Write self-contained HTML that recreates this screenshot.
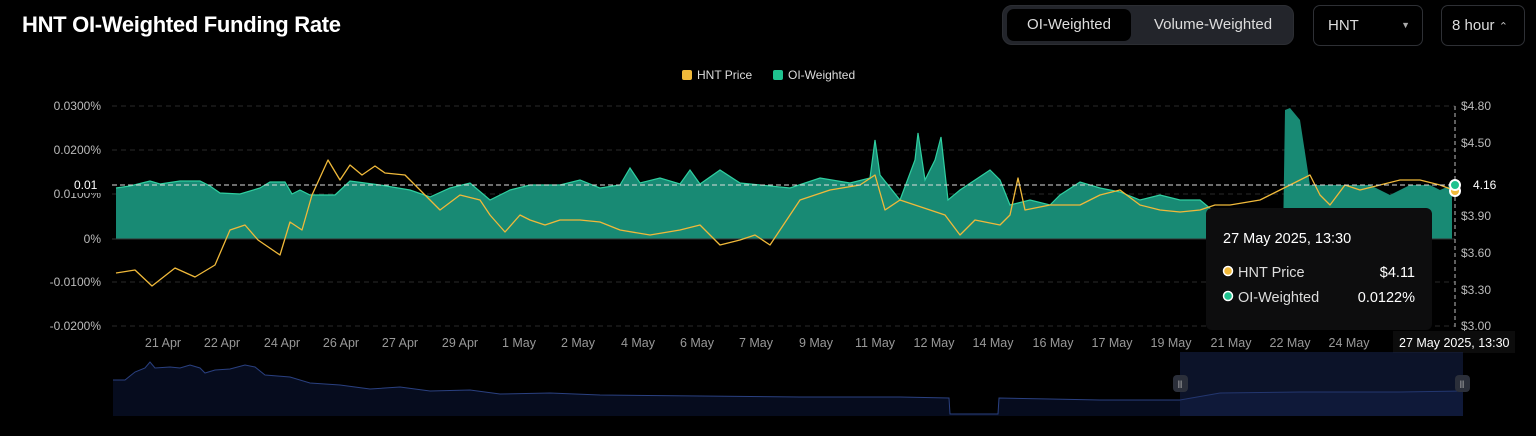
<!DOCTYPE html>
<html><head><style>
body{margin:0;background:#000;width:1536px;height:436px;overflow:hidden;font-family:"Liberation Sans",sans-serif;color:#fff;position:relative}
.t{position:absolute;left:22px;top:12px;font-size:22px;font-weight:bold;letter-spacing:-0.3px}
.seg{position:absolute;left:1002px;top:5px;width:292px;height:40px;background:#23252b;border-radius:10px;border:1px solid #2c2e33;box-sizing:border-box}
.seg .a{position:absolute;left:4px;top:3px;width:124px;height:32px;background:#000;border-radius:7px;text-align:center;line-height:32px;font-size:15px;color:#ddd}
.seg .b{position:absolute;left:130px;top:3px;width:160px;line-height:32px;text-align:center;font-size:15px;color:#ddd}
.box{position:absolute;top:5px;height:41px;border:1px solid #2e3035;border-radius:7px;box-sizing:border-box;font-size:15px;color:#ddd;line-height:39px}
.lg{position:absolute;top:68px;font-size:12px;color:#ddd}
.sq{display:inline-block;width:10px;height:10px;border-radius:2px;vertical-align:-1px;margin-right:5px}
</style></head><body>
<div class="t">HNT OI-Weighted Funding Rate</div>
<div class="seg"><div class="a">OI-Weighted</div><div class="b">Volume-Weighted</div></div>
<div class="box" style="left:1313px;width:110px;padding-left:14px">HNT<span style="position:absolute;right:12px;top:0;font-size:9px;color:#aaa">▼</span></div>
<div class="box" style="left:1441px;width:84px;padding-left:10px">8 hour <span style="font-size:11px;color:#bbb">⌃</span></div>
<div class="lg" style="left:682px"><span class="sq" style="background:#f0b93a"></span>HNT Price</div>
<div class="lg" style="left:773px"><span class="sq" style="background:#1fc28f"></span>OI-Weighted</div>
<svg width="1536" height="436" style="position:absolute;left:0;top:0" font-family="Liberation Sans, sans-serif">
<g stroke="#2a2a2a" stroke-dasharray="5,4">
<line x1="112" y1="106" x2="1455" y2="106"/><line x1="112" y1="150" x2="1455" y2="150"/><line x1="112" y1="194" x2="1455" y2="194"/><line x1="112" y1="282" x2="1455" y2="282"/><line x1="112" y1="326" x2="1455" y2="326"/></g>
<g fill="#bbb" font-size="12" text-anchor="end">
<text x="101" y="110">0.0300%</text><text x="101" y="154">0.0200%</text><text x="101" y="198">0.0100%</text><text x="101" y="243">0%</text><text x="101" y="286">-0.0100%</text><text x="101" y="330">-0.0200%</text></g>
<g fill="#bbb" font-size="12"><text x="1461" y="110">$4.80</text><text x="1461" y="147">$4.50</text><text x="1461" y="220">$3.90</text><text x="1461" y="257">$3.60</text><text x="1461" y="294">$3.30</text><text x="1461" y="330">$3.00</text></g>
<path fill="#188a74" d="M116,239 L116,188 130,186 150,181 160,184 180,181 200,181 210,186 220,193 240,194 260,188 270,182 285,182 292,194 300,190 310,195 335,195 350,181 380,185 410,190 430,197 450,188 470,183 490,200 510,190 530,185 560,185 580,180 600,188 620,185 630,168 640,183 660,178 680,184 690,170 700,184 720,170 740,183 760,185 790,188 820,178 850,183 870,178 875,140 880,175 900,200 915,160 918,133 925,180 935,160 941,137 948,200 960,190 990,170 1000,180 1010,205 1030,200 1050,205 1060,195 1080,182 1100,188 1120,192 1140,200 1160,195 1180,200 1200,200 1212,210 1213,239 1283,239 1285,110 1290,108 1300,120 1310,185 1330,185 1370,185 1390,195 1410,185 1430,185 1440,190 1452,185 1452,239Z"/>
<path fill="none" stroke="#2fcfa0" stroke-width="1.2" d="M116,188 130,186 150,181 160,184 180,181 200,181 210,186 220,193 240,194 260,188 270,182 285,182 292,194 300,190 310,195 335,195 350,181 380,185 410,190 430,197 450,188 470,183 490,200 510,190 530,185 560,185 580,180 600,188 620,185 630,168 640,183 660,178 680,184 690,170 700,184 720,170 740,183 760,185 790,188 820,178 850,183 870,178 875,140 880,175 900,200 915,160 918,133 925,180 935,160 941,137 948,200 960,190 990,170 1000,180 1010,205 1030,200 1050,205 1060,195 1080,182 1100,188 1120,192 1140,200 1160,195 1180,200 1200,200 1212,210"/>
<line x1="112" y1="239" x2="1455" y2="239" stroke="#333"/>
<path fill="none" stroke="#f0b93a" stroke-width="1.3" stroke-linejoin="round" d="M116,273 135,270 152,286 175,268 195,277 215,265 230,230 245,225 258,240 280,255 290,222 302,230 312,195 328,160 340,180 350,165 362,175 375,166 385,173 405,175 420,190 440,210 460,195 480,200 490,215 505,232 520,215 530,220 545,225 560,220 580,220 600,222 620,230 650,235 680,230 700,225 720,245 740,240 755,235 770,245 790,215 800,200 830,190 860,185 875,175 885,210 900,200 930,210 945,215 960,235 975,220 1000,225 1010,215 1018,178 1025,210 1050,205 1080,205 1100,195 1120,190 1140,205 1160,210 1180,212 1200,210 1215,205 1230,205 1260,200 1280,190 1300,180 1310,175 1320,195 1330,205 1345,185 1360,190 1380,185 1400,180 1420,180 1440,185 1453,190"/>
<line x1="112" y1="185" x2="1455" y2="185" stroke="#ddd" stroke-dasharray="5,3"/>
<line x1="1455" y1="106" x2="1455" y2="330" stroke="#bbb" stroke-dasharray="4,3"/>
<rect x="70" y="177" width="32" height="16" fill="#000"/><text x="74" y="189" font-size="12" fill="#fff">0.01</text>
<text x="1473" y="189" font-size="12" fill="#fff">4.16</text>
<circle cx="1455" cy="191" r="5" fill="#f0b93a" stroke="#fff" stroke-width="2"/>
<circle cx="1455" cy="185" r="5" fill="#1fc28f" stroke="#fff" stroke-width="2"/>
<g fill="#999" font-size="12.5" text-anchor="middle">
<text x="163" y="347">21 Apr</text><text x="222" y="347">22 Apr</text><text x="282" y="347">24 Apr</text><text x="341" y="347">26 Apr</text><text x="400" y="347">27 Apr</text><text x="460" y="347">29 Apr</text><text x="519" y="347">1 May</text><text x="578" y="347">2 May</text><text x="638" y="347">4 May</text><text x="697" y="347">6 May</text><text x="756" y="347">7 May</text><text x="816" y="347">9 May</text><text x="875" y="347">11 May</text><text x="934" y="347">12 May</text><text x="993" y="347">14 May</text><text x="1053" y="347">16 May</text><text x="1112" y="347">17 May</text><text x="1171" y="347">19 May</text><text x="1231" y="347">21 May</text><text x="1290" y="347">22 May</text><text x="1349" y="347">24 May</text></g>
<rect x="1393" y="331" width="122" height="22" fill="#0c0c0c"/><text x="1399" y="347" font-size="12.5" fill="#fff">27 May 2025, 13:30</text>
<rect x="1206" y="208" width="226" height="122" rx="6" fill="#0d0d0e"/>
<text x="1223" y="243" font-size="14.5" fill="#fff">27 May 2025, 13:30</text>
<circle cx="1228" cy="271" r="4.5" fill="#f0b93a" stroke="#fff" stroke-width="1.5"/><text x="1238" y="277" font-size="14.5" fill="#ddd">HNT Price</text><text x="1415" y="277" font-size="14.5" fill="#fff" text-anchor="end">$4.11</text>
<circle cx="1228" cy="296" r="4.5" fill="#1fc28f" stroke="#fff" stroke-width="1.5"/><text x="1238" y="302" font-size="14.5" fill="#ddd">OI-Weighted</text><text x="1415" y="302" font-size="14.5" fill="#fff" text-anchor="end">0.0122%</text>
<path fill="#060c1e" d="M113,416 L113,380 125,380 135,372 145,368 150,362 155,368 170,367 180,368 190,365 200,368 205,373 215,370 230,369 245,365 255,367 265,375 290,377 310,383 340,385 370,389 400,387 430,391 470,390 500,394 550,393 600,395 700,396 800,397 900,397 949,398 950,414 998,414 999,398 1050,399 1100,400 1180,400 1220,393 1300,392 1400,392 1463,391 1463,416Z"/>
<path fill="none" stroke="#2a4080" stroke-width="1" d="M113,380 125,380 135,372 145,368 150,362 155,368 170,367 180,368 190,365 200,368 205,373 215,370 230,369 245,365 255,367 265,375 290,377 310,383 340,385 370,389 400,387 430,391 470,390 500,394 550,393 600,395 700,396 800,397 900,397 949,398 950,414 998,414 999,398 1050,399 1100,400 1180,400 1220,393 1300,392 1400,392 1463,391"/>
<rect x="1180" y="352" width="283" height="64" fill="#1a2a5a" opacity="0.45"/>
<rect x="1173" y="375" width="15" height="17" rx="4" fill="#2b2f3a"/><text x="1180" y="388" font-size="10" fill="#aaa" text-anchor="middle">ll</text>
<rect x="1455" y="375" width="15" height="17" rx="4" fill="#2b2f3a"/><text x="1462" y="388" font-size="10" fill="#aaa" text-anchor="middle">ll</text>
</svg>
</body></html>
